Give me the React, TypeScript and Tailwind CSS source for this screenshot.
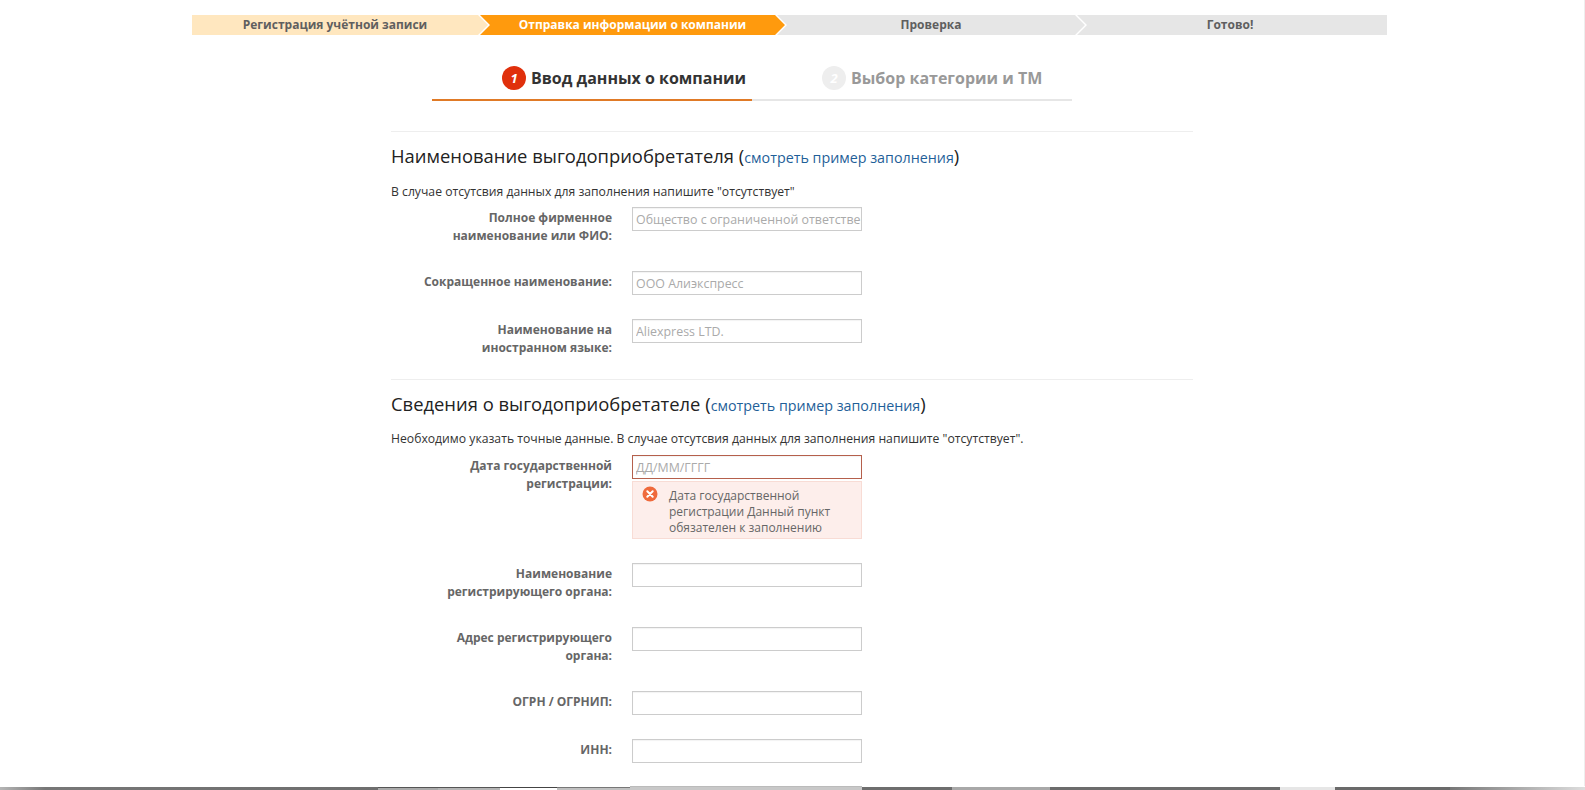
import React from "react";

const font = { fontFamily: '"Open Sans", "Noto Sans", sans-serif' };

function Row({ label, placeholder, error }: { label: React.ReactNode; placeholder?: string; error?: boolean }) {
  return (
    <div className="flex mb-6">
      <label className="w-[221px] pt-[2px] pb-[2px] text-right text-[12px] leading-[18px] font-bold text-[#666]">{label}</label>
      <div className="ml-5 w-[230px]">
        <input
          readOnly
          placeholder={placeholder}
          className={
            "block w-full h-6 border pl-[3px] pr-0 text-[12.4px] bg-white outline-none placeholder:text-[#aaa] shadow-[inset_0_1px_1px_rgba(0,0,0,0.05)] " +
            (error ? "border-[#b5604c]" : "border-[#ccc]")
          }
        />
        {error && (
          <div className="mt-[2px] flex h-[58px] border border-[#f8dcd5] bg-[#fdeeeb] pl-[9px] pt-[6px] text-[12px] leading-[16px] text-[#666]">
            <svg width="16" height="16" viewBox="0 0 16 16" className="-mt-[2px] shrink-0">
              <circle cx="8" cy="8" r="7.5" fill="#ef6a3c" />
              <path d="M5.3 5.3l5.4 5.4M10.7 5.3l-5.4 5.4" stroke="#fff" strokeWidth="2" strokeLinecap="round" />
            </svg>
            <div className="ml-[11px]">
              Дата государственной
              <br />
              регистрации Данный пункт
              <br />
              обязателен к заполнению
            </div>
          </div>
        )}
      </div>
    </div>
  );
}

function Heading({ title, note, noteClass }: { title: string; note: string; noteClass: string }) {
  return (
    <>
      <h2 className="text-[18.4px] leading-6 font-normal text-[#222] whitespace-nowrap">
        {title} (<a className="text-[14.3px] text-[#1f5f99]">смотреть пример заполнения</a>)
      </h2>
      <p className={"text-[12.2px] leading-[18px] text-[#333] whitespace-nowrap " + noteClass}>{note}</p>
    </>
  );
}

export default function App() {
  return (
    <div className="relative flex h-[790px] w-[1585px] flex-col overflow-hidden bg-white" style={font}>
      <div className="flex-1 overflow-hidden border-r border-[#eee]">
        {/* step bar */}
        <div className="ml-[192px] mt-[15px] flex h-[20px] w-[1195px] text-[12px] font-bold leading-[20px] text-[#5f5f5f]">
          <div className="w-[296px] shrink-0 bg-[#ffe7bf] pr-[10px] text-center [clip-path:polygon(0_0,286px_0,100%_50%,286px_100%,0_100%)]">
            Регистрация учётной записи
          </div>
          <div className="-ml-[8px] w-[305px] shrink-0 bg-[#ff9a0d] text-center text-white [clip-path:polygon(0_0,295px_0,100%_50%,295px_100%,0_100%,10px_50%)]">
            Отправка информации о компании
          </div>
          <div className="-ml-[8px] w-[308px] shrink-0 bg-[#e6e6e6] text-center [clip-path:polygon(0_0,298px_0,100%_50%,298px_100%,0_100%,10px_50%)]">
            Проверка
          </div>
          <div className="-ml-[8px] flex-1 bg-[#e6e6e6] pr-[4px] text-center [clip-path:polygon(0_0,100%_0,100%_100%,0_100%,10px_50%)]">
            Готово!
          </div>
        </div>

        {/* tabs */}
        <div className="ml-[432px] mt-[31px] flex w-[640px] text-[16px] font-bold leading-6">
          <div className="flex h-[35px] w-[320px] items-start border-b-2 border-[#e07a26] pl-[70px] text-[#333]">
            <span className="mr-[5px] flex h-6 w-6 items-center justify-center rounded-full bg-[#e0300c] text-[13px] italic text-white">1</span>
            Ввод данных о компании
          </div>
          <div className="flex h-[35px] w-[320px] items-start border-b-2 border-[#e6e6e6] pl-[70px] text-[#999]">
            <span className="mr-[5px] flex h-6 w-6 items-center justify-center rounded-full bg-[#eee] text-[13px] italic text-white">2</span>
            Выбор категории и ТМ
          </div>
        </div>

        {/* form */}
        <div className="ml-[391px] mt-[30px] w-[802px]">
          <section className="border-t border-[#eee] pt-[12px]">
            <Heading noteClass="mt-[13px] mb-[6px]" title="Наименование выгодоприобретателя" note={'В случае отсутсвия данных для заполнения напишите "отсутствует"'} />
            <Row label={<>Полное фирменное<br />наименование или ФИО:</>} placeholder="Общество с ограниченной ответственностью" />
            <Row label="Сокращенное наименование:" placeholder="ООО Алиэкспресс" />
            <Row label={<>Наименование на<br />иностранном языке:</>} placeholder="Aliexpress LTD." />
          </section>
          <section className="-mt-[4px] border-t border-[#eee] pt-[12px]">
            <Heading noteClass="mt-[12px] mb-[7px]" title="Сведения о выгодоприобретателе" note={'Необходимо указать точные данные. В случае отсутсвия данных для заполнения напишите "отсутствует".'} />
            <Row error label={<>Дата государственной<br />регистрации:</>} placeholder="ДД/ММ/ГГГГ" />
            <Row label={<>Наименование<br />регистрирующего органа:</>} />
            <Row label={<>Адрес регистрирующего<br />органа:</>} />
            <Row label="ОГРН / ОГРНИП:" />
            <Row label="ИНН:" />
          </section>
        </div>
      </div>

      {/* desktop taskbar sliver along the bottom edge */}
      <div className="flex h-1 shrink-0 items-end">
        <div className="h-[3px] w-[378px] bg-[linear-gradient(90deg,#b5b5b5,#777_12%,#6e6e6e_100%)]" />
        <div className="h-[3px] w-[60px] border-t border-[#555] bg-[#aaa]" />
        <div className="h-[3px] w-[62px] border-t border-[#555] bg-[#b5b5b5]" />
        <div className="h-[3px] w-[57px] border-t border-[#444] bg-white" />
        <div className="h-[3px] w-[73px] border-t border-[#777] bg-[#c0c0c0]" />
        <div className="h-[4px] w-[232px] border-t border-[#bbb] bg-[#c8c8c8]" />
        <div className="h-[3px] w-[90px] bg-[#6e6e6e]" />
        <div className="h-[3px] w-[98px] bg-[#a8a8a8]" />
        <div className="h-[3px] w-[230px] bg-[#6c6c6c]" />
        <div className="h-[3px] w-[55px] bg-[#e6e6e6]" />
        <div className="h-[3px] w-[115px] bg-[#6a6a6a]" />
        <div className="h-[3px] flex-1 bg-[linear-gradient(90deg,#777,#ddd)]" />
      </div>
    </div>
  );
}
